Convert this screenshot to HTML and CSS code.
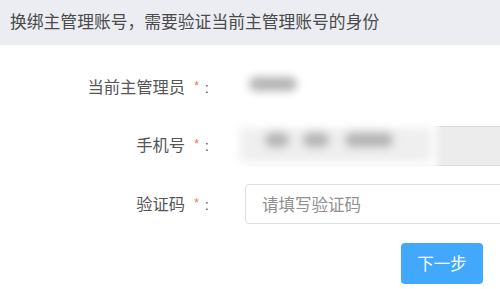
FILE: index.html
```html
<!DOCTYPE html>
<html lang="zh-CN">
<head>
<meta charset="utf-8">
<title>换绑主管理账号</title>
<link rel="stylesheet" href="styles.css">
</head>
<body>
<div class="page">
  <div class="header">换绑主管理账号，需要验证当前主管理账号的身份</div>
  <div class="form">
    <div class="row">
      <div class="label">当前主管理员<span class="req">*</span><span class="colon">:</span></div>
      <div class="control">
        <div class="value-blur"><span class="blob blob-name"></span></div>
      </div>
    </div>
    <div class="row">
      <div class="label">手机号<span class="req">*</span><span class="colon">:</span></div>
      <div class="control">
        <div class="input input-disabled"></div>
        <div class="mask">
          <span class="blob blob-a"></span>
          <span class="blob blob-b"></span>
          <span class="blob blob-c"></span>
        </div>
      </div>
    </div>
    <div class="row">
      <div class="label">验证码<span class="req">*</span><span class="colon">:</span></div>
      <div class="control">
        <input class="input" type="text" placeholder="请填写验证码">
      </div>
    </div>
    <div class="actions">
      <button class="btn" type="button">下一步</button>
    </div>
  </div>
</div>
</body>
</html>
```
FILE: styles.css
```css
html, body {
  margin: 0;
  padding: 0;
  background: #fff;
  overflow: hidden;
}
.page {
  width: 500px;
  height: 289px;
  overflow: hidden;
  font-family: "Noto Sans CJK SC", "Noto Sans", "Liberation Sans", sans-serif;
  color: #555;
}
.header {
  height: 45px;
  line-height: 42px;
  background: #ebedf2;
  padding-left: 10px;
  font-size: 16.8px;
  color: #4a4a4a;
  white-space: nowrap;
}
.form {
  padding-top: 22px;
}
.row {
  display: flex;
  align-items: center;
  height: 40px;
  margin-bottom: 18.5px;
}
.label {
  width: 209px;
  flex: none;
  text-align: right;
  font-size: 16.3px;
  color: #555;
  white-space: nowrap;
  line-height: 40px;
}
.req {
  color: #f56c6c;
  font-family: "Liberation Sans", sans-serif;
  font-size: 12px;
  margin-left: 9px;
  position: relative;
  top: -3px;
}
.colon {
  font-family: "Liberation Sans", sans-serif;
  font-size: 15px;
  margin-left: 6px;
  color: #555;
}
.control {
  position: relative;
  margin-left: 36px;
  width: 300px;
  flex: none;
  height: 40px;
}
.value-blur {
  position: relative;
  height: 40px;
}
.blob {
  position: absolute;
  display: block;
  background: #b4b4b4;
  border-radius: 8px;
  filter: blur(4px);
}
.blob-name {
  left: 4px;
  top: 10px;
  width: 48px;
  height: 14px;
}
.input {
  box-sizing: border-box;
  display: block;
  width: 100%;
  height: 40px;
  border: 1px solid #dcdfe6;
  border-radius: 4px;
  padding: 0 0 0 16px;
  font-family: "Noto Sans CJK SC", "Noto Sans", sans-serif;
  font-size: 16.5px;
  color: #555;
  background: #fff;
  outline: none;
}
.input::placeholder {
  color: #909090;
}
.input-disabled {
  background: #ececec;
  border-color: #dadada;
}
.mask {
  position: absolute;
  left: -10px;
  top: -15px;
  width: 202px;
  height: 58px;
}
.mask::before {
  content: "";
  position: absolute;
  inset: 0;
  background: linear-gradient(to bottom, #fff 0, #fff 20%, #efefef 38%, #efefef 82%, #fff 100%);
  box-shadow: 0 0 8px 5px #fff inset;
  filter: blur(3px);
}
.blob-a {
  left: 30px;
  top: 22px;
  width: 24px;
  height: 14px;
}
.blob-b {
  left: 68px;
  top: 22px;
  width: 26px;
  height: 14px;
}
.blob-c {
  left: 110px;
  top: 22px;
  width: 48px;
  height: 14px;
}
.actions {
  display: flex;
  justify-content: flex-end;
  padding-right: 17px;
}
.btn {
  width: 82px;
  height: 41px;
  border: none;
  border-radius: 4px;
  background: #42a8fb;
  color: #fff;
  font-family: "Noto Sans CJK SC", "Noto Sans", sans-serif;
  font-size: 16.5px;
  padding: 0;
  cursor: pointer;
}
```
